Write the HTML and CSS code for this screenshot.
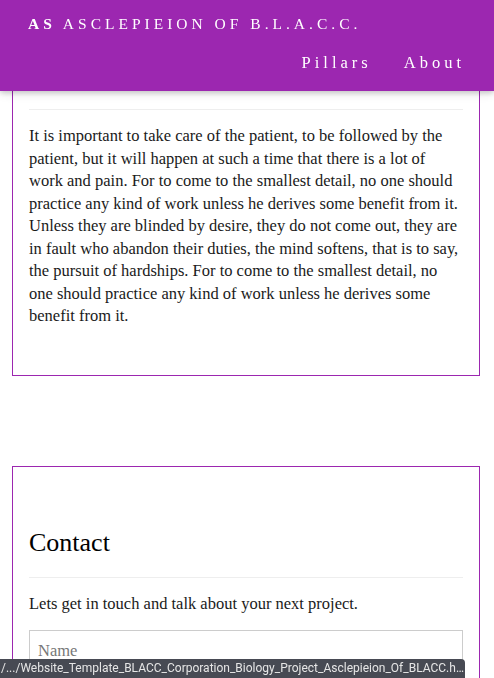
FILE: index.html
```html
<!DOCTYPE html>
<html lang="en">
<head>
<meta charset="utf-8">
<title>Asclepieion of B.L.A.C.C.</title>
<link rel="stylesheet" href="styles.css">
</head>
<body>
<header class="topbar">
  <nav class="bar">
    <a class="brand" href="#home"><b>AS</b> ASCLEPIEION OF B.L.A.C.C.</a>
    <div class="links">
      <a class="item" href="#pillars">Pillars</a>
      <a class="item" href="#about">About</a>
    </div>
  </nav>
</header>

<main class="page">
  <section class="card card-about" id="about">
    <hr class="rule">
    <p class="text">It is important to take care of the patient, to be followed by the patient, but it will happen at such a time that there is a lot of work and pain. For to come to the smallest detail, no one should practice any kind of work unless he derives some benefit from it. Unless they are blinded by desire, they do not come out, they are in fault who abandon their duties, the mind softens, that is to say, the pursuit of hardships. For to come to the smallest detail, no one should practice any kind of work unless he derives some benefit from it.</p>
  </section>

  <section class="card card-contact" id="contact">
    <h3 class="heading">Contact</h3>
    <hr class="rule">
    <p class="text">Lets get in touch and talk about your next project.</p>
    <form class="form">
      <input class="input" type="text" placeholder="Name">
    </form>
  </section>
</main>

<div class="status">/.../Website_Template_BLACC_Corporation_Biology_Project_Asclepieion_Of_BLACC.h…</div>
</body>
</html>
```
FILE: styles.css
```css
html, body {
  margin: 0;
  padding: 0;
}
body {
  font-family: "Liberation Serif", "Times New Roman", serif;
  font-size: 16.5px;
  line-height: 22.5px;
  color: #1a1a1a;
  background: #fff;
  overflow: hidden;
}
.topbar {
  position: fixed;
  top: 0;
  left: 0;
  right: 0;
  z-index: 2;
  background: #9c27b0;
  color: #fff;
  box-shadow: 0 2px 5px 0 rgba(0,0,0,0.16), 0 2px 10px 0 rgba(0,0,0,0.12);
}
.bar {
  display: flex;
  flex-direction: column;
  padding: 5px 13px 9px 12px;
}
.brand, .item {
  color: #fff;
  text-decoration: none;
  letter-spacing: 4px;
  padding: 8px 16px;
  line-height: 22.5px;
}
.brand {
  font-size: 15.5px;
}
.brand b {
  font-weight: bold;
}
.links {
  display: flex;
  justify-content: flex-end;
}
.page {
  padding-top: 80px;
}
.card {
  margin: 0 14px 0 12px;
  border: 1px solid #9c27b0;
  padding: 0 16px;
}
.card-about {
  padding-top: 28px;
  padding-bottom: 31px;
}
.card-about .text {
  margin-right: 2px;
}
.card-contact {
  margin-top: 90px;
  padding-top: 48px;
  padding-bottom: 40px;
}
.rule {
  border: 0;
  border-top: 1px solid #eee;
  margin: 0;
}
.text {
  margin: 15px 0 16px;
}
.heading {
  font-size: 26px;
  font-weight: normal;
  line-height: 36px;
  margin: 10px 0 16px;
  color: #000;
}
.card-contact .text {
  margin-bottom: 15px;
}
.form {
  margin: 0;
}
.input {
  display: block;
  width: 100%;
  box-sizing: border-box;
  border: 1px solid #ccc;
  padding: 9px 8px 8px;
  font-family: inherit;
  font-size: inherit;
  line-height: 22.5px;
  color: #000;
  background: #fff;
  outline: none;
}
.input::placeholder {
  color: #777;
}
.status {
  position: fixed;
  left: 0;
  bottom: 0;
  z-index: 3;
  width: 465px;
  height: 19px;
  box-sizing: border-box;
  padding: 0 0 0 1px;
  background: #474a53;
  color: #e6e6e6;
  font-family: Roboto, "Noto Sans", sans-serif;
  font-size: 12px;
  line-height: 19px;
  white-space: nowrap;
  overflow: hidden;
  border-top-right-radius: 4px;
}
```
